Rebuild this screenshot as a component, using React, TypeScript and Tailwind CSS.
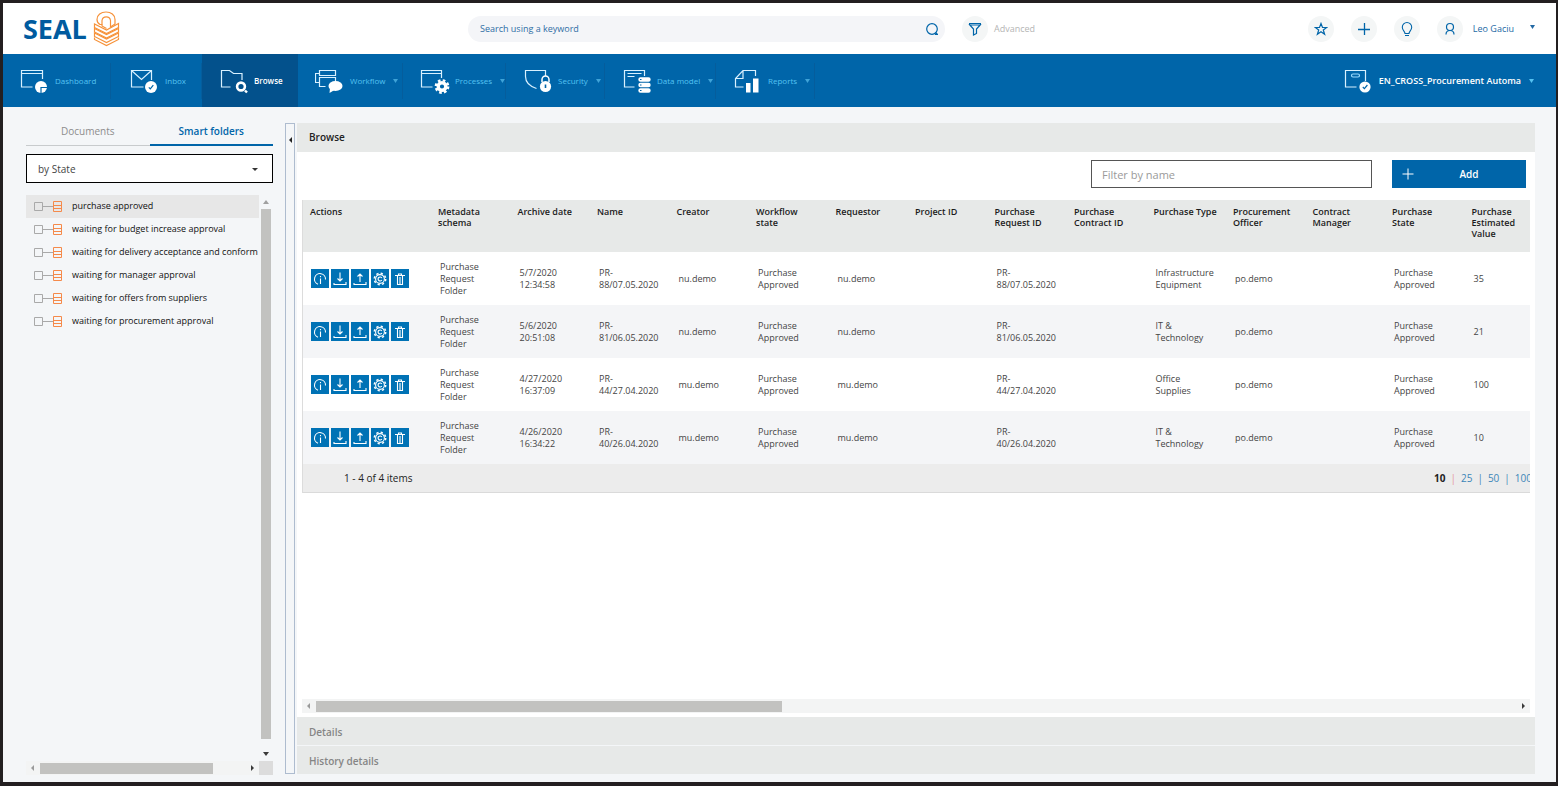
import React from "react";

type IconProps = { className?: string };

const BADGE = "#ffffff";

function NavSvg({ children }: { children: React.ReactNode }) {
  return (
    <svg width="30" height="26" viewBox="0 0 30 26" fill="none" stroke="#d9f1ff" strokeWidth="1.2" className="shrink-0" aria-hidden="true">
      {children}
    </svg>
  );
}

function DashboardIcon() {
  return (
    <NavSvg>
      <path d="M22.5 11V2.5h-21v16.5h11M1.500 5.500h21" />
      <circle cx="21" cy="19" r="6" fill={BADGE} stroke="none" />
      <path d="M21 25.500V19.500h6.500" stroke="#0065a9" />
    </NavSvg>
  );
}

function InboxIcon() {
  return (
    <NavSvg>
      <path d="M21.500 12V2.500h-20v16.500h12M1.500 2.500l10 9 10-9" />
      <circle cx="21" cy="19" r="6" fill={BADGE} stroke="none" />
      <path d="M18.800 19.300l1.500 1.500 3-3.600" stroke="#0065a9" />
    </NavSvg>
  );
}

function BrowseIcon() {
  return (
    <NavSvg>
      <path d="M23 12V5.500h-8.500l-4-3h-8v16.500h9" />
      <circle cx="22" cy="18.500" r="3.900" stroke={BADGE} strokeWidth="2.600" />
      <path d="M26 22.500l2 2" stroke={BADGE} strokeWidth="2.400" />
    </NavSvg>
  );
}

function WorkflowIcon() {
  return (
    <NavSvg>
      <path d="M4.500 2.500h16v5h-16zM4.500 5.500h-4v9h4M20.500 14V9.500h-16v9h6" />
      <ellipse cx="20.500" cy="18" rx="7" ry="5" fill={BADGE} stroke="none" />
      <path d="M15 20l-.5 5 5-3z" fill={BADGE} stroke="none" />
    </NavSvg>
  );
}

function ProcessesIcon() {
  return (
    <NavSvg>
      <path d="M21.500 10V2.500h-20v16.500h11M1.500 5.500h20" />
      <circle cx="22" cy="18.500" r="3.800" stroke={BADGE} strokeWidth="3.400" />
      <circle cx="22" cy="18.500" r="6.200" stroke={BADGE} strokeWidth="2.400" strokeDasharray="2.600 2.270" />
    </NavSvg>
  );
}

function SecurityIcon() {
  return (
    <NavSvg>
      <path d="M22.500 8V2.500h-20v6c0 6 5 10 11 12" />
      <path d="M19 14v-2.500a3.500 3.500 0 0 1 7 0V14" stroke={BADGE} strokeWidth="1.500" />
      <circle cx="22.500" cy="18.500" r="5.600" fill={BADGE} stroke="none" />
      <path d="M22.500 16.500v3.500" stroke="#0065a9" strokeWidth="1.600" />
    </NavSvg>
  );
}

function DataModelIcon() {
  return (
    <NavSvg>
      <path d="M22.500 8V2.500h-20v16.500h10M5.500 5.500h14M5.500 8.500h7" />
      <path d="M18.500 11.500h8M18.500 17h8M18.500 22.500h8" stroke={BADGE} strokeWidth="4.400" strokeLinecap="round" />
      <path d="M18 11.500h1.500M18 17h1.500M18 22.500h1.500" stroke="#0065a9" />
    </NavSvg>
  );
}

function ReportsIcon() {
  return (
    <NavSvg>
      <path d="M22.500 8V2.500H10l-7.500 8v8.500h8M10 2.500v8H2.500" />
      <path d="M13 15h4.500v9.500H13zM20 10.500h5.500v14H20z" fill={BADGE} stroke="none" />
    </NavSvg>
  );
}

function ArchiveIcon() {
  return (
    <NavSvg>
      <path d="M21.500 13V2.500h-20v16.500h11" />
      <rect x="7.500" y="6" width="8" height="3" rx="1.500" stroke="#9bdcff" />
      <circle cx="21" cy="19" r="5.600" fill={BADGE} stroke="none" />
      <path d="M18.800 19l1.600 1.600 3-3.600" stroke="#0065a9" />
    </NavSvg>
  );
}

function Caret({ className }: IconProps) {
  return (
    <svg width="5" height="4" viewBox="0 0 5 4" fill="currentColor" className={className} aria-hidden="true">
      <path d="M0 0h5L2.500 4z" />
    </svg>
  );
}

function SealLogo() {
  return (
    <svg width="28" height="36" viewBox="0 0 28 36" fill="none" stroke="#f6923a" strokeWidth="1.200" aria-hidden="true">
      <path d="M9 13.500H7c-1.800-1-3-2.500-3-5C4 4 8 1 13 1s9 3 9 7.500V13l-4.500 3V9.500a4.300 4.300 0 0 0-8.500 0z" />
      <path d="M9 13.500V15l4.500 2.500" />
      <path d="M1.500 13v3.500l12 6 12-6V12.500L13.500 19z" />
      <path d="M1.500 17.500V21l12 6 12-6v-3.500l-12 6z" />
      <path d="M1.500 22v3.500l12 6 12-6V22l-12 6z" />
      <path d="M1.500 26.500v2l12 6 12-6v-2" />
    </svg>
  );
}

function ActionSvg({ children }: { children: React.ReactNode }) {
  return (
    <svg width="14" height="14" viewBox="0 0 14 14" fill="none" stroke="white" strokeWidth="1.100" aria-hidden="true">
      {children}
    </svg>
  );
}

const actions = [
  {
    label: "Info",
    icon: (
      <ActionSvg>
        <path d="M5 12.200A5.500 5.500 0 1 1 12.500 7.500M7.500 6.500v5.500M7.500 4v1.200" />
      </ActionSvg>
    ),
  },
  {
    label: "Download",
    icon: (
      <ActionSvg>
        <path d="M7 .5v8.500M4.500 6.500L7 9l2.500-2.500M1 11v1.500h12V10" />
      </ActionSvg>
    ),
  },
  {
    label: "Upload",
    icon: (
      <ActionSvg>
        <path d="M7 10V2M4.500 4.500L7 2l2.500 2.500M1 11v1.500h12V10" />
      </ActionSvg>
    ),
  },
  {
    label: "Settings",
    icon: (
      <ActionSvg>
        <circle cx="7" cy="7" r="4.400" />
        <circle cx="7" cy="7" r="5.700" strokeDasharray="2.240 2.240" strokeWidth="1.500" />
        <path d="M8.800 6A2 2 0 1 0 8.800 8" />
      </ActionSvg>
    ),
  },
  {
    label: "Delete",
    icon: (
      <ActionSvg>
        <path d="M2 3.500h10M5.500 3.500V2h3v1.500M4.500 3.500v9h5v-9M7 5v7" />
      </ActionSvg>
    ),
  },
];

const navItems = [
  { label: "Dashboard", icon: <DashboardIcon />, width: "w-[108px] pl-[17px]" },
  { label: "Inbox", icon: <InboxIcon />, width: "w-[91px] pl-[19px]" },
  { label: "Browse", icon: <BrowseIcon />, width: "w-[96px] pl-[17px]", active: true },
  { label: "Workflow", icon: <WorkflowIcon />, width: "w-[105px] pl-[17px]", menu: true },
  { label: "Processes", icon: <ProcessesIcon />, width: "w-[103px] pl-[17px]", menu: true },
  { label: "Security", icon: <SecurityIcon />, width: "w-[99px] pl-[17px]", menu: true },
  { label: "Data model", icon: <DataModelIcon />, width: "w-[111px] pl-[17px]", menu: true },
  { label: "Reports", icon: <ReportsIcon />, width: "w-[99px] pl-[17px]", menu: true },
];

const folders = [
  "purchase approved",
  "waiting for budget increase approval",
  "waiting for delivery acceptance and conform",
  "waiting for manager approval",
  "waiting for offers from suppliers",
  "waiting for procurement approval",
];

const columns = [
  "Metadata schema",
  "Archive date",
  "Name",
  "Creator",
  "Workflow\nstate",
  "Requestor",
  "Project ID",
  "Purchase Request ID",
  "Purchase Contract ID",
  "Purchase Type",
  "Procurement Officer",
  "Contract Manager",
  "Purchase\nState",
  "Purchase\nEstimated\nValue",
];

function makeRow(date: string, id: string, user: string, type: string, value: string) {
  return ["Purchase Request Folder", date, id, user, "Purchase Approved", user, "", id, "", type, "po.demo", "", "Purchase Approved", value];
}

const rows = [
  makeRow("5/7/2020 12:34:58", "PR- 88/07.05.2020", "nu.demo", "Infrastructure Equipment", "35"),
  makeRow("5/6/2020 20:51:08", "PR- 81/06.05.2020", "nu.demo", "IT & Technology", "21"),
  makeRow("4/27/2020 16:37:09", "PR- 44/27.04.2020", "mu.demo", "Office Supplies", "100"),
  makeRow("4/26/2020 16:34:22", "PR- 40/26.04.2020", "mu.demo", "IT & Technology", "10"),
];

function RoundButton({ label, children }: { label: string; children: React.ReactNode }) {
  return (
    <button type="button" aria-label={label} className="flex size-[26px] shrink-0 items-center justify-center rounded-full bg-[#f4f6f6] text-[#0065a9]">
      {children}
    </button>
  );
}

function TopBar() {
  return (
    <header className="flex h-[51px] shrink-0 items-center bg-white">
      <a href="#home" className="ml-5 flex w-[445px] items-center gap-[6px] text-[27px] leading-8 font-bold text-[#005b9f]">
        SEAL
        <SealLogo />
      </a>
      <div className="flex h-[26px] w-[477px] items-center rounded-full bg-[#f4f5f8] pr-[6px] pl-3">
        <input
          type="text"
          aria-label="Search using a keyword"
          placeholder="Search using a keyword"
          className="min-w-0 flex-1 bg-transparent text-[9px] outline-none placeholder:text-[#2f6ea5] placeholder:opacity-100"
        />
        <button type="button" aria-label="Search" className="text-[#0065a9]">
          <svg width="14" height="14" viewBox="0 0 14 14" fill="none" stroke="currentColor" strokeWidth="1.200">
            <circle cx="7" cy="7" r="5.300" />
            <path d="M10 12.300h3M10.500 10.500l2 2" />
          </svg>
        </button>
      </div>
      <button type="button" className="ml-[17px] flex items-center gap-[6px] text-[9px] text-[#b5b5b5]">
        <span className="flex size-[26px] items-center justify-center rounded-full bg-[#f4f6f6]">
          <svg width="14" height="14" viewBox="0 0 14 14" fill="none" stroke="#0065a9" strokeWidth="1.200">
            <path d="M1 1.500h12M1 2l4.500 5v6l3-1.500V7L13 2M2 3h10" />
          </svg>
        </span>
        Advanced
      </button>
      <div className="ml-auto flex items-center gap-[17px]">
        <RoundButton label="Favourites">
          <svg width="14" height="14" viewBox="0 0 14 14" fill="none" stroke="currentColor" strokeWidth="1.200">
            <path d="M7 1.500l1.500 4h4.200L9.300 8l1.300 4.200L7 9.700l-3.600 2.500L4.700 8 1.300 5.500h4.200z" />
          </svg>
        </RoundButton>
        <RoundButton label="New">
          <svg width="14" height="14" viewBox="0 0 14 14" fill="none" stroke="currentColor" strokeWidth="1.300">
            <path d="M7.500 1v12M1 7.500h12" />
          </svg>
        </RoundButton>
        <RoundButton label="Hints">
          <svg width="12" height="16" viewBox="0 0 12 16" fill="none" stroke="currentColor" strokeWidth="1.100">
            <path d="M4 12.500C4 10.500 1.300 9.500 1.300 6.200a4.700 4.700 0 0 1 9.400 0C10.700 9.500 8 10.500 8 12.500zM4 14.500h4" />
          </svg>
        </RoundButton>
        <button type="button" className="mr-[21px] flex items-center text-[9px] text-[#2369a4]">
          <span className="mr-[10px] flex size-[26px] items-center justify-center rounded-full bg-[#f4f6f6] text-[#0065a9]">
            <svg width="12" height="14" viewBox="0 0 12 14" fill="none" stroke="currentColor" strokeWidth="1.200">
              <circle cx="6" cy="5" r="3.500" />
              <path d="M2 12.500c0-3 1.500-4 4-4s4 1 4 4" />
            </svg>
          </span>
          Leo Gaciu
          <Caret className="mb-1 ml-4" />
        </button>
      </div>
    </header>
  );
}

function NavBar() {
  return (
    <nav className="flex h-[53px] shrink-0 bg-[#0065a9]">
      {navItems.map((item) => (
        <a
          key={item.label}
          href={"#" + item.label.toLowerCase().replace(" ", "-")}
          className={
            "flex items-center text-[8px] whitespace-nowrap " +
            item.width +
            (item.active ? " bg-[#03518c] font-semibold text-white" : " text-[#55c3f2]")
          }
        >
          {item.icon}
          <span className="ml-[5px]">{item.label}</span>
          {item.menu && <Caret className="ml-2 text-[#3fa3d8]" />}
          {!item.active && <span className="ml-auto h-9 w-px bg-[#055d9c]" />}
        </a>
      ))}
      <button type="button" className="mr-[22px] ml-auto flex items-center text-[9px] font-semibold text-white">
        <ArchiveIcon />
        <span className="ml-[5px]">EN_CROSS_Procurement Automa</span>
        <Caret className="ml-2 text-[#55c3f2]" />
      </button>
    </nav>
  );
}

function Arrow({ d, color }: { d: string; color: string }) {
  return (
    <svg width="8" height="8" viewBox="0 0 8 8" fill={color} className="shrink-0" aria-hidden="true">
      <path d={d} />
    </svg>
  );
}

function HScroll({ thumb }: { thumb: string }) {
  return (
    <div className="flex h-[14px] flex-1 items-center justify-between bg-[#f3f4f4] px-[3px]" aria-hidden="true">
      <div className="flex flex-1 items-center gap-[3px]">
        <Arrow d="M5 1v6L2 4z" color="#9a9a9a" />
        <div className={"h-[11px] bg-[#c2c2c0] " + thumb} />
      </div>
      <Arrow d="M3 1v6l3-3z" color="#3a3a3a" />
    </div>
  );
}

function Sidebar() {
  return (
    <aside className="mb-[7px] ml-[23px] flex w-[247px] shrink-0 flex-col">
      <div role="tablist" className="mt-[10px] flex text-[10px]">
        <button type="button" role="tab" aria-selected="false" className="h-[29px] flex-1 border-b border-[#c8cbcd] text-[#8d8d8d]">
          Documents
        </button>
        <button type="button" role="tab" aria-selected="true" className="h-[29px] flex-1 border-b-2 border-[#0065a9] pt-[1px] font-semibold text-[#0065a9]">
          Smart folders
        </button>
      </div>
      <div className="relative mt-2">
        <select aria-label="Group folders" className="h-[29px] w-full appearance-none border border-black bg-white px-[11px] pt-[1px] text-[10px] text-[#444]">
          <option>by State</option>
        </select>
        <svg width="6" height="3" viewBox="0 0 6 3" fill="#333" className="pointer-events-none absolute top-[14px] right-[15px]" aria-hidden="true">
          <path d="M0 0h6L3 3z" />
        </svg>
      </div>
      <div className="mt-3 flex min-h-0 flex-1">
        <ul className="min-w-0 flex-1 overflow-hidden text-[9px] text-[#111]">
          {folders.map((name, i) => (
            <li key={name} className={"flex h-[23px] items-center pb-[1px] pl-2 whitespace-nowrap" + (i === 0 ? " bg-[#e7e7e7]" : "")}>
              <svg width="29" height="13" viewBox="0 0 29 13" fill="none" className="mr-[9px] shrink-0" aria-hidden="true">
                <path d="M.5 2.500h8v8h-8zM9 6.500h10" stroke="#a9a9a9" />
                <path d="M19.500 1.500h8v10h-8zM19.500 5.500h8M19.500 8.500h8" stroke="#f58a4b" />
              </svg>
              <a href="#folder">{name}</a>
            </li>
          ))}
        </ul>
        <div className="flex w-[14px] flex-col items-center pt-[3px] pb-[3px]" aria-hidden="true">
          <Arrow d="M1 6h6L4 2z" color="#a0a0a0" />
          <div className="mt-[3px] mb-[11px] w-[10px] flex-1 bg-[#c2c2c0]" />
          <Arrow d="M1 2h6L4 6z" color="#3a3a3a" />
        </div>
      </div>
      <div className="flex">
        <HScroll thumb="w-[173px]" />
        <div className="size-[14px] bg-[#dcdcdc]" />
      </div>
    </aside>
  );
}

function DataTable() {
  return (
    <div className="overflow-hidden border-l border-[#dcdcdc] text-[9px]">
      <table className="w-full min-w-[1240px] table-fixed border-collapse text-left">
        <thead className="bg-[#e7e9e8] text-[#1c1c1c]">
          <tr className="h-[52px] align-top leading-[11px]">
            <th scope="col" className="w-[127px] py-[6px] pl-[7px] font-semibold">
              Actions
            </th>
            {columns.map((c) => (
              <th key={c} scope="col" className="py-[6px] pl-2 font-semibold whitespace-pre-line">
                {c}
              </th>
            ))}
          </tr>
        </thead>
        <tbody className="text-[#444]">
          {rows.map((r, i) => (
            <tr key={i} className={"h-[53px] leading-3" + (i % 2 ? " bg-[#f4f5f7]" : "")}>
              <td className="pl-2">
                <div className="flex gap-[2px]">
                  {actions.map((a) => (
                    <button key={a.label} type="button" aria-label={a.label} className="flex h-[19px] w-[18px] items-center justify-center bg-[#0072b5]">
                      {a.icon}
                    </button>
                  ))}
                </div>
              </td>
              {r.map((v, j) => (
                <td key={j} className="pr-2 pl-[10px]">
                  {v}
                </td>
              ))}
            </tr>
          ))}
        </tbody>
      </table>
      <div className="flex h-[29px] min-w-[1240px] items-center justify-between border-b border-[#dadada] bg-[#ececec] pr-[11px] pl-[41px] text-[10px] text-[#222]">
        <span>1 - 4 of 4 items</span>
        <div className="flex items-center gap-[5px] text-[#3c86b8]">
          <span className="font-bold text-[#222]">10</span>
          <span className="text-[#e59a9a]">|</span>
          <a href="#25">25</a>
          <span>|</span>
          <a href="#50">50</a>
          <span>|</span>
          <a href="#100">100</a>
        </div>
      </div>
    </div>
  );
}

function SectionBar({ title }: { title: string }) {
  return <button type="button" className="h-[28px] shrink-0 bg-[#e7e9e8] pt-[2px] pl-3 text-left text-[10px] font-semibold text-[#858585]">{title}</button>;
}

export default function App() {
  return (
    <div className="flex h-screen min-h-[600px] flex-col border-t-3 border-r-2 border-b-4 border-l-3 border-[#231f20] bg-[#f4f6f8] font-['Open_Sans','Noto_Sans',sans-serif]">
      <TopBar />
      <NavBar />
      <div className="flex min-h-0 flex-1">
        <Sidebar />
        <div className="mt-4 mb-2 ml-3 w-[10px] shrink-0 border border-[#aebccf]">
          <button type="button" aria-label="Collapse sidebar" className="mt-3 block">
            <Arrow d="M6 1v6L3 4z" color="#222" />
          </button>
        </div>
        <main className="mt-4 mr-[21px] mb-2 ml-[2px] flex min-w-0 flex-1 flex-col">
          <h1 className="flex h-[29px] shrink-0 items-center bg-[#e7e9e8] pl-3 text-[10px] font-semibold text-[#222]">Browse</h1>
          <section className="flex min-h-0 flex-1 flex-col bg-white pt-2 pr-[5px] pl-[5px]">
            <div className="mb-3 flex justify-end gap-5 pr-1">
              <input
                type="text"
                aria-label="Filter by name"
                placeholder="Filter by name"
                className="h-[28px] w-[281px] border border-[#555] bg-white px-[10px] text-[11px] placeholder:text-[#9a9a9a] placeholder:opacity-100"
              />
              <button type="button" className="flex h-[28px] w-[134px] items-center bg-[#0065a9] pl-[10px] text-[10px] font-semibold text-white">
                <svg width="12" height="12" viewBox="0 0 12 12" stroke="white" aria-hidden="true">
                  <path d="M6 .5v11M.5 6h11" />
                </svg>
                <span className="flex-1 pr-[2px] text-center">Add</span>
              </button>
            </div>
            <DataTable />
            <div className="mt-auto mb-1 flex">
              <HScroll thumb="w-[466px]" />
            </div>
          </section>
          <div className="flex shrink-0 flex-col gap-px">
            <SectionBar title="Details" />
            <SectionBar title="History details" />
          </div>
        </main>
      </div>
    </div>
  );
}
